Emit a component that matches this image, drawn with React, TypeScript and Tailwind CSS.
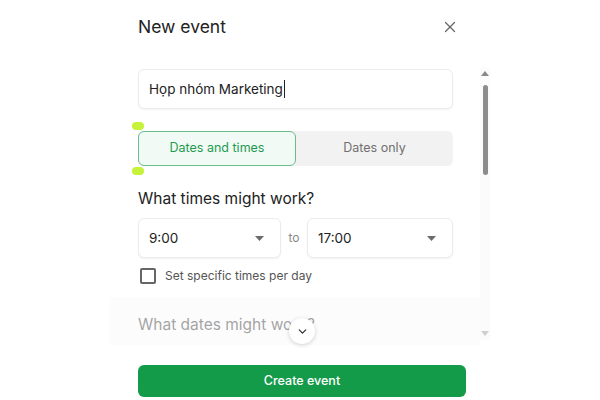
import { ChevronDown, X } from "lucide-react";

function Caret() {
  return (
    <svg width="9" height="5" viewBox="0 0 9 5" className="shrink-0">
      <path d="M0 0h9L4.5 5z" fill="#6b6b6b" />
    </svg>
  );
}

function TimeSelect({ value, width }: { value: string; width: string }) {
  return (
    <div
      className={`flex h-[40px] items-center justify-between rounded-[6px] border border-[#ececec] bg-white pl-[10px] pr-[16px] text-[13.5px] text-[#222] shadow-[0_1px_2px_rgba(0,0,0,0.06)] ${width}`}
    >
      <span>{value}</span>
      <Caret />
    </div>
  );
}

export default function App() {
  return (
    <div
      className="relative h-[400px] w-[600px] overflow-hidden bg-white"
      style={{ fontFamily: "Inter, 'Noto Sans', sans-serif" }}
    >
      {/* Header */}
      <div className="flex h-[66px] items-start pl-[138px] pr-[141px] pt-[15px]">
        <h1 className="flex-1 text-[17.5px] leading-6 text-[#222]">New event</h1>
        <X className="mt-[3px] size-[18px] text-[#666]" strokeWidth={1.7} />
      </div>

      {/* Scroll area */}
      <div className="relative flex h-[279px] pl-[110px]">
        <div className="w-[370px] overflow-hidden pl-[28px] pr-[27px] pt-[3px]">
          <div className="flex h-[40px] items-center rounded-[6px] border border-[#ececec] bg-white px-[10px] text-[13.5px] text-[#222] shadow-[0_1px_2px_rgba(0,0,0,0.06)]">
            Họp nhóm Marketing
            <span className="ml-px h-[18px] w-px bg-[#222]" />
          </div>

          <div className="relative mt-[22px] flex h-[35px] rounded-[6px] bg-[#f2f2f2] text-[12.5px]">
            <div className="flex w-[158px] items-center justify-center rounded-[6px] border border-[#6bbd8a] bg-[#f1faf4] text-[#1f9a52]">
              Dates and times
            </div>
            <div className="flex flex-1 items-center justify-center text-[#707070]">Dates only</div>
            <span className="absolute left-[-6px] top-[-9px] h-[8px] w-[12px] rounded-full bg-[#c6f33a]" />
            <span className="absolute bottom-[-9px] left-[-6px] h-[8px] w-[12px] rounded-full bg-[#c6f33a]" />
          </div>

          <h2 className="mt-[21px] text-[15.5px] leading-6 text-[#222]">What times might work?</h2>

          <div className="mt-[7px] flex items-center">
            <TimeSelect value="9:00" width="w-[143px]" />
            <span className="flex-1 text-center text-[12px] text-[#888]">to</span>
            <TimeSelect value="17:00" width="w-[146px]" />
          </div>

          <label className="mt-[10px] flex h-[16px] items-center gap-[9px] pl-[2px] text-[12px] text-[#555]">
            <span className="size-[16px] rounded-[2px] border-2 border-[#666]" />
            Set specific times per day
          </label>

          <h2 className="mt-[29px] text-[15.5px] leading-6 text-[#222]">What dates might work?</h2>
        </div>

        {/* Scrollbar */}
        <div className="mt-[2px] flex h-[272px] w-[10px] flex-col items-center bg-[#fbfbfb]">
          <svg width="8" height="5" viewBox="0 0 8 5" className="mt-[3px]">
            <path d="M0 5h8L4 0z" fill="#888" />
          </svg>
          <div className="mt-[9px] h-[90px] w-[5px] rounded-full bg-[#8c8c8c]" />
          <div className="flex-1" />
          <svg width="8" height="5" viewBox="0 0 8 5" className="mb-[4px]">
            <path d="M0 0h8L4 5z" fill="#cfcfcf" />
          </svg>
        </div>

        {/* Bottom fade */}
        <div className="pointer-events-none absolute bottom-0 left-[110px] h-[48px] w-[370px] bg-[#fafafa]/60" />
        <div className="absolute left-[289px] top-[252px] flex size-[26px] items-center justify-center rounded-full bg-white shadow-[0_1px_4px_rgba(0,0,0,0.18)]">
          <ChevronDown className="size-[13px] text-[#333]" strokeWidth={2.4} />
        </div>
      </div>

      {/* Footer */}
      <div className="pl-[138px] pt-[20px]">
        <button className="h-[32px] w-[328px] rounded-[6px] bg-[#149b4a] text-[12.5px] font-medium text-white">
          Create event
        </button>
      </div>
    </div>
  );
}
